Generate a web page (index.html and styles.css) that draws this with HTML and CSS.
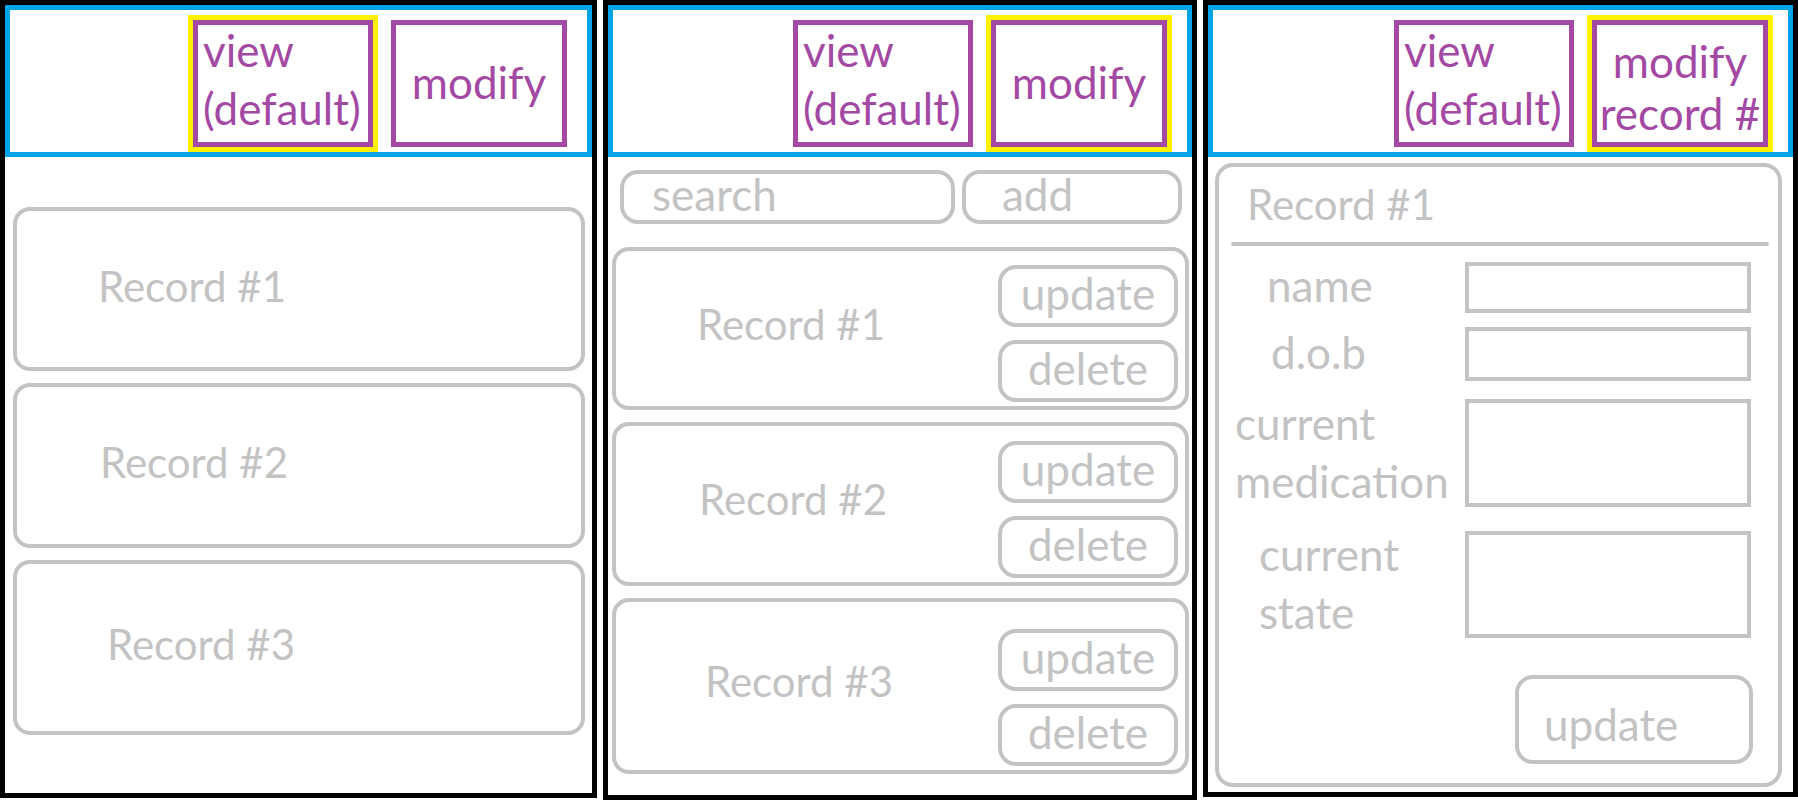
FILE: index.html
```html
<!DOCTYPE html>
<html lang="en">
<head>
<meta charset="utf-8">
<title>Records wireframe</title>
<link rel="stylesheet" href="styles.css">
</head>
<body>
<div class="screens">
  <section class="panel panel-view">
    <header class="tabs">
      <div class="tab tab-view active"><span class="tab-text">view<br>(default)</span></div>
      <div class="tab tab-modify"><span class="tab-text">modify</span></div>
    </header>
    <div class="view-list">
      <div class="card vcard"><span>Record #1</span></div>
      <div class="card vcard"><span>Record #2</span></div>
      <div class="card vcard"><span>Record #3</span></div>
    </div>
  </section>

  <section class="panel panel-modify">
    <header class="tabs">
      <div class="tab tab-view"><span class="tab-text">view<br>(default)</span></div>
      <div class="tab tab-modify active"><span class="tab-text">modify</span></div>
    </header>
    <div class="toolbar">
      <div class="pill pill-search">search</div>
      <div class="pill pill-add">add</div>
    </div>
    <div class="mod-list">
      <div class="card mcard">
        <span class="mcard-title">Record #1</span>
        <div class="mcard-actions">
          <div class="btn">update</div>
          <div class="btn">delete</div>
        </div>
      </div>
      <div class="card mcard">
        <span class="mcard-title">Record #2</span>
        <div class="mcard-actions">
          <div class="btn">update</div>
          <div class="btn">delete</div>
        </div>
      </div>
      <div class="card mcard">
        <span class="mcard-title">Record #3</span>
        <div class="mcard-actions">
          <div class="btn">update</div>
          <div class="btn">delete</div>
        </div>
      </div>
    </div>
  </section>

  <section class="panel panel-edit">
    <header class="tabs">
      <div class="tab tab-view"><span class="tab-text">view<br>(default)</span></div>
      <div class="tab tab-modify tab-record active"><span class="tab-text">modify<br>record #</span></div>
    </header>
    <div class="card ecard">
      <div class="etitle">Record #1</div>
      <div class="erule"></div>
      <div class="erows">
        <div class="erow">
          <div class="elabel lbl-name">name</div>
          <div class="einput in-name"></div>
        </div>
        <div class="erow">
          <div class="elabel lbl-dob">d.o.b</div>
          <div class="einput in-dob"></div>
        </div>
        <div class="erow">
          <div class="elabel elabel-2 lbl-med">current<br>medication</div>
          <div class="einput in-med"></div>
        </div>
        <div class="erow">
          <div class="elabel elabel-2 lbl-state">current<br>state</div>
          <div class="einput in-state"></div>
        </div>
      </div>
      <div class="eupdate">update</div>
    </div>
  </section>
</div>
</body>
</html>
```

FILE: styles.css
```css
* { box-sizing: border-box; }

html, body {
  margin: 0;
  padding: 0;
  background: #ffffff;
}

body {
  font-family: Lato, "Open Sans", "Liberation Sans", sans-serif;
  color: #c3c3c3;
}

.screens {
  display: flex;
  align-items: flex-start;
  gap: 6px;
  width: 1798px;
  height: 800px;
}

/* ---------- panels ---------- */
.panel {
  border: 5px solid #000000;
  display: flex;
  flex-direction: column;
  flex: none;
}
.panel-view { width: 597px; height: 798px; }
.panel-modify { width: 594px; height: 800px; }
.panel-edit { width: 595px; height: 797px; }

/* ---------- header tabs ---------- */
.tabs {
  flex: none;
  height: 152px;
  border: 5px solid #00a2e8;
  display: flex;
  justify-content: flex-end;
  align-items: flex-start;
  gap: 18px;
  padding: 10px 20px 0 0;
}

.tab {
  height: 127px;
  border: 5px solid #a349a4;
  color: #a349a4;
  font-size: 44px;
  white-space: nowrap;
}
.tab-view {
  width: 180px;
  padding-left: 5px;
  line-height: 58px;
}
.tab-view .tab-text {
  display: block;
  margin-top: -4px;
}
.tab-modify {
  width: 176px;
  display: flex;
  align-items: center;
  justify-content: center;
  text-align: center;
  line-height: 58px;
  padding-bottom: 4px;
}
.tab-record {
  line-height: 52px;
  padding: 6px 0 0;
}
.active {
  outline: 5px solid #fff200;
}

/* ---------- shared card ---------- */
.card {
  border: 4px solid #c3c3c3;
  border-radius: 17px;
}

/* ---------- panel 1: view list ---------- */
.view-list {
  display: flex;
  flex-direction: column;
  gap: 12px;
  padding: 50px 7px 0 8px;
}
.vcard {
  display: flex;
  align-items: center;
  font-size: 42px;
  line-height: 50px;
  padding: 0 0 7px 81px;
}
.vcard:nth-child(1) { height: 164px; }
.vcard:nth-child(2) { height: 165px; padding-left: 83px; }
.vcard:nth-child(3) { height: 175px; padding-left: 90px; }

/* ---------- panel 2: modify list ---------- */
.toolbar {
  display: flex;
  gap: 7px;
  padding: 13px 0 0 12px;
}
.pill {
  height: 54px;
  border: 4px solid #c3c3c3;
  border-radius: 18px;
  font-size: 44px;
  line-height: 46px;
  display: flex;
  align-items: center;
  padding-bottom: 6px;
}
.pill-search { width: 335px; padding-left: 28px; }
.pill-add { width: 220px; padding-left: 36px; }

.mod-list {
  display: flex;
  flex-direction: column;
  gap: 12px;
  padding: 23px 3px 0 4px;
}
.mcard {
  display: flex;
  align-items: center;
  padding: 0 7px 4px 81px;
}
.mcard:nth-child(1) { height: 163px; }
.mcard:nth-child(2) { height: 164px; padding-left: 83px; }
.mcard:nth-child(3) { height: 176px; padding-left: 89px; }

.mcard-title {
  font-size: 42px;
  line-height: 50px;
  margin-bottom: 6px;
}
.mcard-actions {
  margin-left: auto;
  align-self: stretch;
  display: flex;
  flex-direction: column;
  justify-content: flex-end;
  gap: 13px;
}
.btn {
  width: 180px;
  height: 62px;
  border: 4px solid #c3c3c3;
  border-radius: 18px;
  font-size: 44px;
  line-height: 50px;
  display: flex;
  align-items: center;
  justify-content: center;
  padding-bottom: 6px;
}

/* ---------- panel 3: edit form ---------- */
.ecard {
  height: 624px;
  margin: 6px 11px 0 7px;
  padding: 12px 25px 0 0;
  border-radius: 18px;
  display: flex;
  flex-direction: column;
}
.etitle {
  font-size: 42px;
  line-height: 50px;
  padding-left: 28px;
}
.erule {
  height: 4px;
  background: #c3c3c3;
  border-radius: 2px;
  margin: 13px -16px 0 12px;
}
.erows {
  display: flex;
  flex-direction: column;
  gap: 13px;
  margin-top: 14px;
}
.erow {
  display: flex;
  align-items: center;
}
.elabel {
  width: 246px;
  flex: none;
  font-size: 44px;
  line-height: 51px;
  padding-bottom: 3px;
}
.elabel-2 {
  line-height: 58px;
  padding-bottom: 2px;
}
.lbl-name { padding-left: 48px; }
.lbl-dob { padding-left: 52px; }
.lbl-med { padding-left: 16px; }
.lbl-state { padding-left: 40px; }

.einput {
  width: 286px;
  border: 4px solid #c3c3c3;
}
.in-name { height: 51px; }
.in-dob { height: 54px; }
.in-med { height: 108px; }
.in-state { height: 107px; }

.eupdate {
  align-self: flex-end;
  margin-top: 32px;
  width: 238px;
  height: 89px;
  border: 4px solid #c3c3c3;
  border-radius: 18px;
  font-size: 44px;
  line-height: 54px;
  padding: 8px 0 0 25px;
  display: flex;
  align-items: center;
}
```
